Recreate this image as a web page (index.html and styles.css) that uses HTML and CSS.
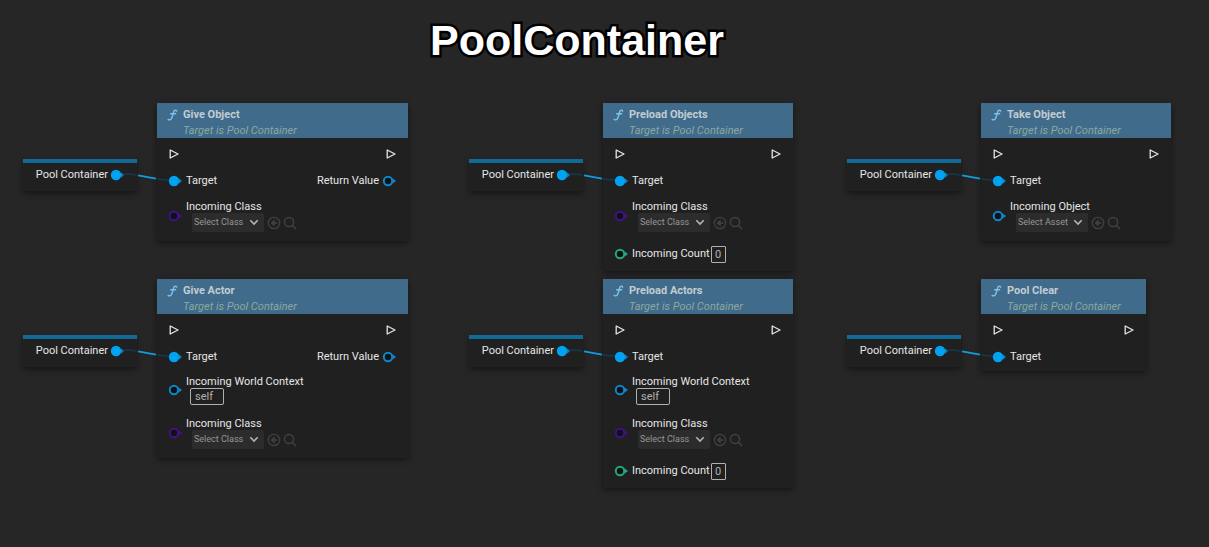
FILE: index.html
```
<!DOCTYPE html>
<html lang="en">
<head>
<meta charset="utf-8">
<title>PoolContainer</title>
<link rel="stylesheet" href="styles.css">
</head>
<body>
<svg class="sprite" aria-hidden="true">
  <symbol id="pin-full" viewBox="0 0 13 12"><circle cx="5" cy="6" r="5.200" fill="#00a2f2"/><path d="M10 3.200 13 6l-3 2.800z" fill="#0b80bd"/></symbol>
  <symbol id="pin-ring" viewBox="0 0 13 12"><circle cx="5" cy="6" r="4.200" fill="#0c1216" stroke="currentColor" stroke-width="2"/><path d="M9.400 3.200 13 6l-3.600 2.800z" fill="currentColor"/></symbol>
  <symbol id="exec" viewBox="0 0 10 10"><path d="M1.200 1v8L9 5z" fill="none" stroke="#e4e4e4" stroke-width="1.300" stroke-linejoin="round"/></symbol>
  <symbol id="func" viewBox="0 0 12 13"><path d="M10.600 2.300C10 .9 7.900 1 7.300 3L5.300 9.700C4.700 11.600 2.800 12.300 1.200 11.300M4 5.200h5.500" fill="none" stroke="#7cc4ee" stroke-width="1.500" stroke-linecap="round"/></symbol>
  <symbol id="chevron" viewBox="0 0 10 7"><path d="M1.300 1.300 5 5l3.700-3.700" fill="none" stroke="#b4b4b4" stroke-width="1.600"/></symbol>
  <symbol id="use-selected" viewBox="0 0 14 14"><circle cx="7" cy="7" r="5.700" fill="none" stroke="#404040" stroke-width="1.300"/><path d="M10.400 7H5M7 4.800 4.600 7 7 9.200z" fill="#404040" stroke="#404040" stroke-width="1.300"/></symbol>
  <symbol id="browse" viewBox="0 0 14 14"><circle cx="6" cy="6" r="4.600" fill="none" stroke="#404040" stroke-width="1.500"/><path d="m9.500 9.500 3.500 3.500" stroke="#404040" stroke-width="1.700"/></symbol>
  <symbol id="wire" viewBox="0 0 20 12"><path d="M-13 2C-6 2-5 2 0 3.100M20 6.900C24 7.600 26 8 32 8" fill="none" stroke="#173a4b" stroke-width="1.300"/><path d="M1 3.300 19 6.700" stroke="#159be0" stroke-width="1.800"/></symbol>
</svg>

<h1 class="title">PoolContainer</h1>

<main class="graph">

  <section class="group">
    <div class="variable"><span>Pool Container</span><svg class="pin"><use href="#pin-full"/></svg></div>
    <svg class="wire"><use href="#wire"/></svg>
    <article class="node node-wide">
      <header class="head"><svg class="func"><use href="#func"/></svg><h2>Give Object</h2><p>Target is Pool Container</p></header>
      <div class="row"><svg class="exec"><use href="#exec"/></svg><svg class="exec"><use href="#exec"/></svg></div>
      <div class="row data"><span class="port"><svg class="pin"><use href="#pin-full"/></svg>Target</span><span class="port">Return Value<svg class="pin blue"><use href="#pin-ring"/></svg></span></div>
      <div class="param"><svg class="pin purple"><use href="#pin-ring"/></svg><div><label for="c1">Incoming Class</label>
        <div class="picker"><span class="drop"><select id="c1"><option>Select Class</option></select><svg><use href="#chevron"/></svg></span><button aria-label="Use selected"><svg><use href="#use-selected"/></svg></button><button aria-label="Browse"><svg><use href="#browse"/></svg></button></div></div></div>
    </article>
  </section>

  <section class="group">
    <div class="variable"><span>Pool Container</span><svg class="pin"><use href="#pin-full"/></svg></div>
    <svg class="wire"><use href="#wire"/></svg>
    <article class="node">
      <header class="head"><svg class="func"><use href="#func"/></svg><h2>Preload Objects</h2><p>Target is Pool Container</p></header>
      <div class="row"><svg class="exec"><use href="#exec"/></svg><svg class="exec"><use href="#exec"/></svg></div>
      <div class="row data"><span class="port"><svg class="pin"><use href="#pin-full"/></svg>Target</span></div>
      <div class="param"><svg class="pin purple"><use href="#pin-ring"/></svg><div><label for="c2">Incoming Class</label>
        <div class="picker"><span class="drop"><select id="c2"><option>Select Class</option></select><svg><use href="#chevron"/></svg></span><button aria-label="Use selected"><svg><use href="#use-selected"/></svg></button><button aria-label="Browse"><svg><use href="#browse"/></svg></button></div></div></div>
      <div class="count"><span class="port"><svg class="pin green"><use href="#pin-ring"/></svg><label for="n2">Incoming Count</label></span><input id="n2" class="number" value="0"></div>
    </article>
  </section>

  <section class="group">
    <div class="variable"><span>Pool Container</span><svg class="pin"><use href="#pin-full"/></svg></div>
    <svg class="wire"><use href="#wire"/></svg>
    <article class="node">
      <header class="head"><svg class="func"><use href="#func"/></svg><h2>Take Object</h2><p>Target is Pool Container</p></header>
      <div class="row"><svg class="exec"><use href="#exec"/></svg><svg class="exec"><use href="#exec"/></svg></div>
      <div class="row data"><span class="port"><svg class="pin"><use href="#pin-full"/></svg>Target</span></div>
      <div class="param"><svg class="pin blue"><use href="#pin-ring"/></svg><div><label for="c3">Incoming Object</label>
        <div class="picker"><span class="drop"><select id="c3"><option>Select Asset</option></select><svg><use href="#chevron"/></svg></span><button aria-label="Use selected"><svg><use href="#use-selected"/></svg></button><button aria-label="Browse"><svg><use href="#browse"/></svg></button></div></div></div>
    </article>
  </section>

  <section class="group">
    <div class="variable"><span>Pool Container</span><svg class="pin"><use href="#pin-full"/></svg></div>
    <svg class="wire"><use href="#wire"/></svg>
    <article class="node node-wide">
      <header class="head"><svg class="func"><use href="#func"/></svg><h2>Give Actor</h2><p>Target is Pool Container</p></header>
      <div class="row"><svg class="exec"><use href="#exec"/></svg><svg class="exec"><use href="#exec"/></svg></div>
      <div class="row data"><span class="port"><svg class="pin"><use href="#pin-full"/></svg>Target</span><span class="port">Return Value<svg class="pin blue"><use href="#pin-ring"/></svg></span></div>
      <div class="param context"><svg class="pin blue"><use href="#pin-ring"/></svg><div><label for="w4">Incoming World Context</label><input id="w4" class="self" value="self"></div></div>
      <div class="param"><svg class="pin purple"><use href="#pin-ring"/></svg><div><label for="c4">Incoming Class</label>
        <div class="picker"><span class="drop"><select id="c4"><option>Select Class</option></select><svg><use href="#chevron"/></svg></span><button aria-label="Use selected"><svg><use href="#use-selected"/></svg></button><button aria-label="Browse"><svg><use href="#browse"/></svg></button></div></div></div>
    </article>
  </section>

  <section class="group">
    <div class="variable"><span>Pool Container</span><svg class="pin"><use href="#pin-full"/></svg></div>
    <svg class="wire"><use href="#wire"/></svg>
    <article class="node">
      <header class="head"><svg class="func"><use href="#func"/></svg><h2>Preload Actors</h2><p>Target is Pool Container</p></header>
      <div class="row"><svg class="exec"><use href="#exec"/></svg><svg class="exec"><use href="#exec"/></svg></div>
      <div class="row data"><span class="port"><svg class="pin"><use href="#pin-full"/></svg>Target</span></div>
      <div class="param context"><svg class="pin blue"><use href="#pin-ring"/></svg><div><label for="w5">Incoming World Context</label><input id="w5" class="self" value="self"></div></div>
      <div class="param"><svg class="pin purple"><use href="#pin-ring"/></svg><div><label for="c5">Incoming Class</label>
        <div class="picker"><span class="drop"><select id="c5"><option>Select Class</option></select><svg><use href="#chevron"/></svg></span><button aria-label="Use selected"><svg><use href="#use-selected"/></svg></button><button aria-label="Browse"><svg><use href="#browse"/></svg></button></div></div></div>
      <div class="count"><span class="port"><svg class="pin green"><use href="#pin-ring"/></svg><label for="n5">Incoming Count</label></span><input id="n5" class="number" value="0"></div>
    </article>
  </section>

  <section class="group">
    <div class="variable"><span>Pool Container</span><svg class="pin"><use href="#pin-full"/></svg></div>
    <svg class="wire"><use href="#wire"/></svg>
    <article class="node node-small">
      <header class="head"><svg class="func"><use href="#func"/></svg><h2>Pool Clear</h2><p>Target is Pool Container</p></header>
      <div class="row"><svg class="exec"><use href="#exec"/></svg><svg class="exec"><use href="#exec"/></svg></div>
      <div class="row data"><span class="port"><svg class="pin"><use href="#pin-full"/></svg>Target</span></div>
    </article>
  </section>

</main>
</body>
</html>
```

FILE: styles.css
```
* { box-sizing: border-box; }
body {
  margin: 0;
  min-height: 100vh;
  background: #262626;
  color: #e6e6e6;
  font: 11px/14px Roboto, "Liberation Sans", sans-serif;
}
.sprite { position: absolute; width: 0; height: 0; }
svg { display: block; flex: none; overflow: visible; }
symbol { overflow: visible; }

.title {
  margin: 0;
  padding: 15px 55px 0 0;
  height: 103px;
  text-align: center;
  font: bold 43px/50px "Liberation Sans", Arial, sans-serif;
  color: #fff;
  -webkit-text-stroke: 5px #000;
  paint-order: stroke fill;
}

.graph {
  display: grid;
  grid-template-columns: 446fr 378fr 362fr;
  grid-auto-rows: minmax(176px, auto);
  padding: 0 0 16px 23px;
}
.group { display: flex; align-items: flex-start; }

.variable {
  display: flex;
  align-items: center;
  justify-content: flex-end;
  gap: 3px;
  width: 114px;
  height: 32px;
  margin-top: 56px;
  padding: 0 13px 4px 0;
  border-top: 4px solid #106b96;
  background: #202020;
  box-shadow: 0 3px 6px rgba(0, 0, 0, .4);
}
.wire { width: 20px; height: 12px; margin-top: 69px; z-index: 1; }

.node {
  width: 190px;
  padding-bottom: 4px;
  background: #202020;
  box-shadow: 0 2px 6px rgba(0, 0, 0, .45);
}
.node-wide { width: 251px; }
.node-small { width: 165px; padding-bottom: 2px; }

.head {
  display: grid;
  grid-template-columns: 16px 1fr;
  height: 35px;
  margin-bottom: 3px;
  padding: 4px 10px 0;
  background: #406b8a;
}
.head h2 { margin: 0; font-size: 11px; line-height: 15px; color: #c3ccd2; }
.head p { grid-column: 2; margin: 0; font-style: italic; line-height: 15px; color: #8ba8a0; }
.func { width: 11px; height: 12px; margin-top: 2px; }

.row {
  display: flex;
  align-items: center;
  justify-content: space-between;
  height: 26px;
  padding: 0 12px;
}
.data { padding-top: 2px; }
.exec { width: 10px; height: 10px; }
.port { display: flex; align-items: center; gap: 4px; }
.pin { width: 13px; height: 12px; }
.blue { color: #0f86c4; }
.purple { color: #43108a; }
.green { color: #27a67c; }

.param {
  display: flex;
  align-items: center;
  gap: 4px;
  padding: 6px 12px 5px;
}
.param label { padding-top: 1px; line-height: 13px; }
.context { padding-top: 5px; }
label { display: block; }
.picker { display: flex; align-items: center; height: 19px; padding-left: 6px; gap: 2px; }
.drop { position: relative; margin-right: 1px; }
.drop svg { position: absolute; right: 5px; top: 6px; width: 10px; height: 7px; pointer-events: none; }
select {
  appearance: none;
  display: block;
  width: 72px;
  height: 19px;
  padding: 0 0 0 2px;
  border: 0;
  border-radius: 2px;
  background: #2c2c2c;
  color: #969696;
  font: 9px/19px Roboto, sans-serif;
}
button { padding: 0; border: 0; background: none; }
button svg { width: 14px; height: 14px; }
input {
  display: block;
  height: 17px;
  border: 1px solid #b0b0b0;
  border-radius: 2px;
  background: transparent;
  color: #b0b0b0;
  font: 11px/15px Roboto, sans-serif;
}
.self { width: 34px; margin-left: 4px; padding: 0 4px; }
.number { width: 15px; padding: 0; border-radius: 1px; text-align: center; }
.count {
  display: flex;
  align-items: center;
  gap: 1px;
  height: 30px;
  padding: 4px 12px 0;
}
```
